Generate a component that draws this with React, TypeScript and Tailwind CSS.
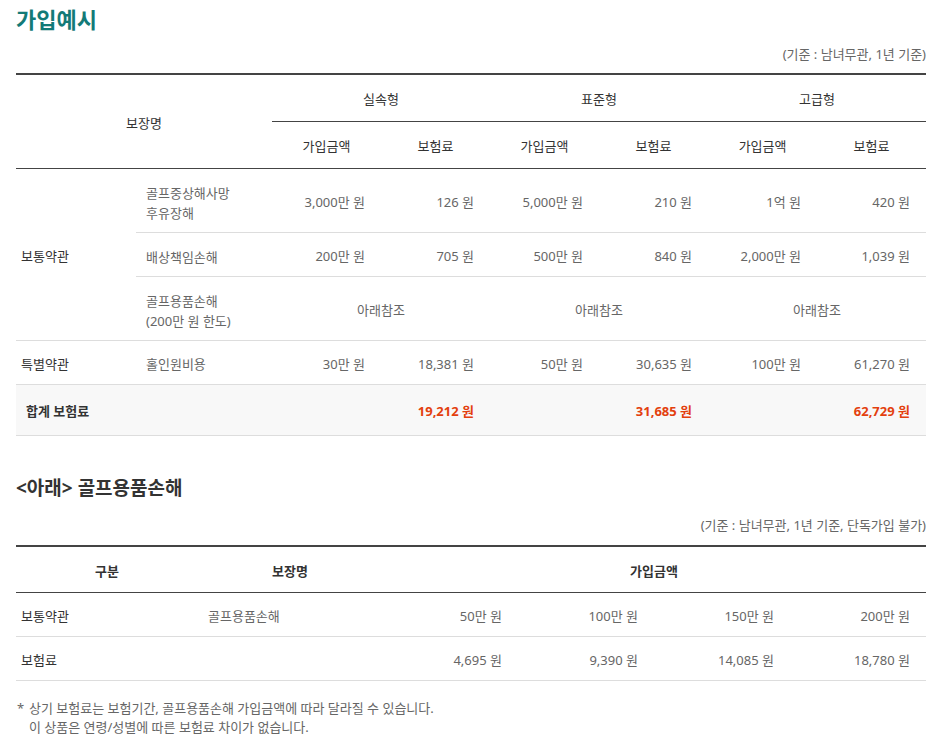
import React from "react";

const font = { fontFamily: '"Noto Sans", "Noto Sans CJK KR", sans-serif' };

type Row = {
  name: React.ReactNode;
  vals?: string[];
  ref?: boolean;
  h: string;
  border: string;
};

export default function App() {
  const rows: Row[] = [
    {
      name: (
        <>
          골프중상해사망
          <br />
          후유장해
        </>
      ),
      vals: ["3,000만 원", "126 원", "5,000만 원", "210 원", "1억 원", "420 원"],
      h: "h-[64px]",
      border: "border-b border-[#dddddd]",
    },
    {
      name: "배상책임손해",
      vals: ["200만 원", "705 원", "500만 원", "840 원", "2,000만 원", "1,039 원"],
      h: "h-[44px]",
      border: "border-b border-[#dddddd]",
    },
    {
      name: (
        <>
          골프용품손해
          <br />
          (200만 원 한도)
        </>
      ),
      ref: true,
      h: "h-[64px]",
      border: "border-b border-[#dddddd]",
    },
  ];

  return (
    <div className="w-[946px] bg-white pl-4 pr-5 text-[13px] text-[#666666]" style={font}>
      <h1 className="mt-[4px] text-[22px] font-bold leading-[30px] text-[#137a77]">가입예시</h1>
      <p className="mt-[10px] text-right leading-[20px]">(기준 : 남녀무관, 1년 기준)</p>

      <table className="mt-[9px] w-full table-fixed border-collapse border-t-2 border-[#444444] [&_td]:pt-[5px] [&_th]:pt-[4px]">
        <colgroup>
          <col className="w-[120px]" />
          <col className="w-[136px]" />
          <col className="w-[109px]" />
          <col className="w-[109px]" />
          <col className="w-[109px]" />
          <col className="w-[109px]" />
          <col className="w-[109px]" />
          <col />
        </colgroup>
        <thead className="text-[#333333]">
          <tr className="h-[47px]">
            <th rowSpan={2} colSpan={2} className="border-b border-[#444444] font-normal">
              보장명
            </th>
            <th colSpan={2} className="border-b border-[#444444] font-normal">실속형</th>
            <th colSpan={2} className="border-b border-[#444444] font-normal">표준형</th>
            <th colSpan={2} className="border-b border-[#444444] font-normal">고급형</th>
          </tr>
          <tr className="h-[47px]">
            {["가입금액", "보험료", "가입금액", "보험료", "가입금액", "보험료"].map((t, i) => (
              <th key={i} className="border-b border-[#444444] font-normal">
                {t}
              </th>
            ))}
          </tr>
        </thead>
        <tbody>
          {rows.map((r, i) => (
            <tr key={i} className={r.h}>
              {i === 0 && (
                <td rowSpan={3} className="border-b border-[#dddddd] pl-[5px] text-[#333333]">
                  보통약관
                </td>
              )}
              <td className={`${r.border} pl-[10px] leading-[20px]`}>{r.name}</td>
              {r.ref ? (
                <>
                  <td colSpan={2} className={`${r.border} text-center`}>아래참조</td>
                  <td colSpan={2} className={`${r.border} text-center`}>아래참조</td>
                  <td colSpan={2} className={`${r.border} text-center`}>아래참조</td>
                </>
              ) : (
                r.vals!.map((v, j) => (
                  <td key={j} className={`${r.border} pr-[16px] text-right`}>
                    {v}
                  </td>
                ))
              )}
            </tr>
          ))}
          <tr className="h-[44px]">
            <td className="border-b border-[#dddddd] pl-[5px] text-[#333333]">특별약관</td>
            <td className="border-b border-[#dddddd] pl-[10px]">홀인원비용</td>
            {["30만 원", "18,381 원", "50만 원", "30,635 원", "100만 원", "61,270 원"].map((v, j) => (
              <td key={j} className="border-b border-[#dddddd] pr-[16px] text-right">
                {v}
              </td>
            ))}
          </tr>
          <tr className="h-[51px] bg-[#f8f8f8] font-bold">
            <td colSpan={2} className="border-b border-[#dddddd] pl-[10px] text-[#333333]">
              합계 보험료
            </td>
            <td className="border-b border-[#dddddd]" />
            <td className="border-b border-[#dddddd] pr-[16px] text-right text-[#e3400e]">19,212 원</td>
            <td className="border-b border-[#dddddd]" />
            <td className="border-b border-[#dddddd] pr-[16px] text-right text-[#e3400e]">31,685 원</td>
            <td className="border-b border-[#dddddd]" />
            <td className="border-b border-[#dddddd] pr-[16px] text-right text-[#e3400e]">62,729 원</td>
          </tr>
        </tbody>
      </table>

      <h2 className="mt-[38px] text-[19px] font-bold leading-[28px] text-[#333333]">&lt;아래&gt; 골프용품손해</h2>
      <p className="mt-[13px] text-right leading-[20px]">(기준 : 남녀무관, 1년 기준, 단독가입 불가)</p>

      <table className="mt-[10px] w-full table-fixed border-collapse border-t-2 border-[#444444] [&_td]:pt-[5px] [&_th]:pt-[4px]">
        <colgroup>
          <col className="w-[182px]" />
          <col className="w-[184px]" />
          <col className="w-[136px]" />
          <col className="w-[136px]" />
          <col className="w-[136px]" />
          <col />
        </colgroup>
        <thead className="text-[#333333]">
          <tr className="h-[47px]">
            <th className="border-b border-[#444444] font-bold">구분</th>
            <th className="border-b border-[#444444] font-bold">보장명</th>
            <th colSpan={4} className="border-b border-[#444444] font-bold">가입금액</th>
          </tr>
        </thead>
        <tbody>
          <tr className="h-[44px]">
            <td className="border-b border-[#dddddd] pl-[5px] text-[#333333]">보통약관</td>
            <td className="border-b border-[#dddddd] pl-[10px]">골프용품손해</td>
            {["50만 원", "100만 원", "150만 원", "200만 원"].map((v, j) => (
              <td key={j} className="border-b border-[#dddddd] pr-[16px] text-right">
                {v}
              </td>
            ))}
          </tr>
          <tr className="h-[44px]">
            <td className="border-b border-[#dddddd] pl-[5px] text-[#333333]">보험료</td>
            <td className="border-b border-[#dddddd]" />
            {["4,695 원", "9,390 원", "14,085 원", "18,780 원"].map((v, j) => (
              <td key={j} className="border-b border-[#dddddd] pr-[16px] text-right">
                {v}
              </td>
            ))}
          </tr>
        </tbody>
      </table>

      <div className="mt-[18px] text-[13px] leading-[19px]">
        <div className="flex">
          <span className="w-[13px] shrink-0 pl-[1px]">*</span>
          <span>상기 보험료는 보험기간, 골프용품손해 가입금액에 따라 달라질 수 있습니다.</span>
        </div>
        <div className="pl-[13px]">이 상품은 연령/성별에 따른 보험료 차이가 없습니다.</div>
      </div>
    </div>
  );
}
